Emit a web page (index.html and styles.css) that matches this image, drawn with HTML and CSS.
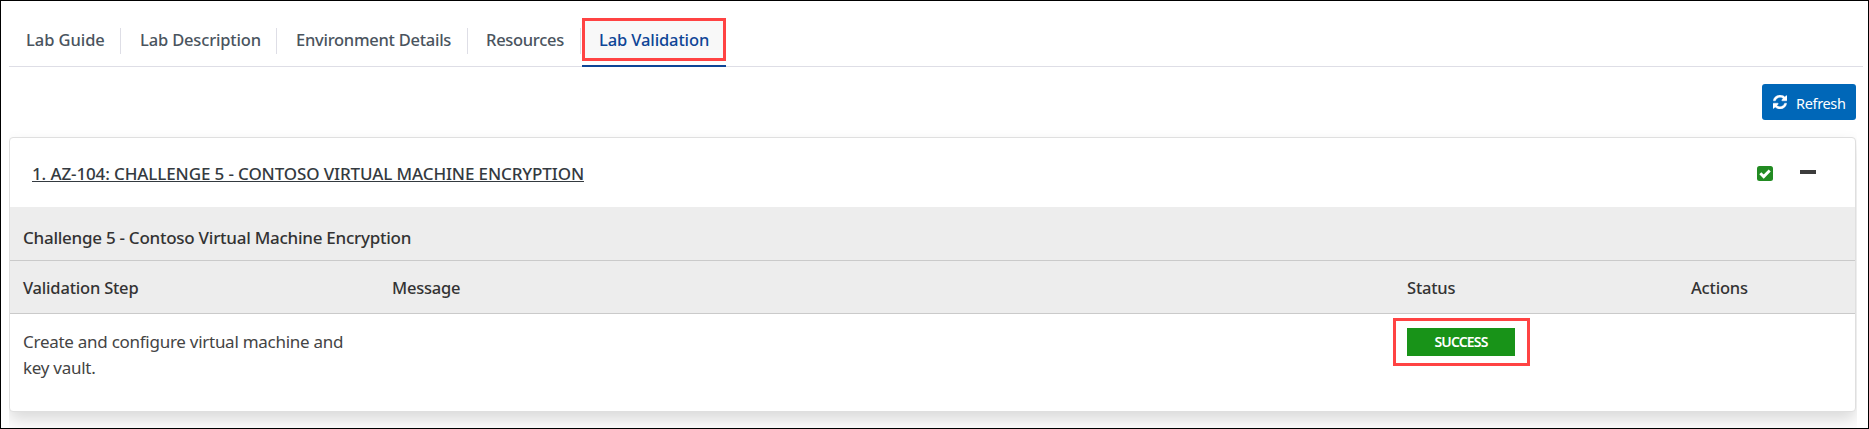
FILE: index.html
```html
<!DOCTYPE html>
<html lang="en">
<head>
<meta charset="utf-8">
<title>Lab Validation</title>
<link rel="stylesheet" href="styles.css">
</head>
<body>
<div class="page">
  <nav class="tabs">
    <a class="tab tab-guide">Lab Guide</a>
    <a class="tab tab-description">Lab Description</a>
    <a class="tab tab-environment">Environment Details</a>
    <a class="tab tab-resources">Resources</a>
    <a class="tab tab-validation active"><span class="highlight">Lab Validation</span></a>
  </nav>
  <main class="content">
    <div class="toolbar">
      <button class="refresh">
        <svg width="14" height="14" viewBox="0 0 1536 1536" fill="currentColor" stroke="currentColor" stroke-width="40"><path d="M1511 928q0 5-1 7-64 268-268 434.500T764 1536q-146 0-282.500-55T238 1324l-129 129q-19 19-45 19t-45-19-19-45V960q0-26 19-45t45-19h448q26 0 45 19t19 45-19 45l-137 137q71 66 161 102t187 36q134 0 250-65t186-179q11-17 53-117 8-23 30-23h192q13 0 22.500 9.500t9.500 22.500zm25-800v448q0 26-19 45t-45 19h-448q-26 0-45-19t-19-45 19-45l138-138Q969 256 768 256q-134 0-250 65T332 500q-11 17-53 117-8 23-30 23H50q-13 0-22.500-9.500T18 608v-7q65-268 270-434.500T768 0q146 0 284 55.500T1297 212l130-129q19-19 45-19t45 19 19 45z"/></svg>
        <span>Refresh</span>
      </button>
    </div>
    <section class="card">
      <header class="card-head">
        <h2 class="title">1. AZ-104: CHALLENGE 5 - CONTOSO VIRTUAL MACHINE ENCRYPTION</h2>
        <svg class="check" width="16" height="15" viewBox="0 0 16 15"><rect width="16" height="15" rx="2.500" fill="#228b22"/><path d="M3.300 7.300 6.700 10.600 12.700 4.500" fill="none" stroke="#fff" stroke-width="2.900"/></svg>
        <span class="collapse"></span>
      </header>
      <h3 class="subtitle">Challenge 5 - Contoso Virtual Machine Encryption</h3>
      <div class="row row-head">
        <span>Validation Step</span><span>Message</span><span>Status</span><span>Actions</span>
      </div>
      <div class="row row-body">
        <p class="step">Create and configure virtual machine and<br>key vault.</p>
        <span></span>
        <div class="status"><span class="badge">SUCCESS</span></div>
        <span></span>
      </div>
    </section>
  </main>
</div>
</body>
</html>
```
FILE: styles.css
```css
* { box-sizing: border-box; }
body { margin: 0; background: #fff; font-family: "Noto Sans", "Open Sans", sans-serif; }
.page {
  width: 1869px;
  height: 429px;
  border: 1px solid #000;
  padding: 17px 0 0 8px;
  overflow: hidden;
}

/* Tabs */
.tabs {
  display: flex;
  width: 1854px;
  height: 49px;
  border-bottom: 1px solid #dedee6;
}
.tab {
  position: relative;
  height: 49px;
  padding: 0 0 0 20px;
  font-size: 16.5px;
  font-weight: 500;
  line-height: 43px;
  color: #4a545e;
  white-space: nowrap;
}
.tab:not(.active)::after {
  content: "";
  position: absolute;
  right: 0;
  top: 10px;
  width: 1px;
  height: 26px;
  background: #dedee6;
}
.tab-guide { width: 112px; padding-left: 17px; letter-spacing: -0.06px; }
.tab-description { width: 156px; padding-left: 19px; letter-spacing: -0.16px; }
.tab-environment { width: 191px; padding-left: 19px; letter-spacing: -0.26px; }
.tab-resources { width: 113px; padding-left: 18px; letter-spacing: -0.3px; }
.tab-validation {
  width: 144px;
  margin-left: 1px;
  padding: 0;
  letter-spacing: -0.12px;
  color: #0e4596;
  border-bottom: 2px solid #0e4596;
}
.highlight {
  display: block;
  height: 43px;
  padding-left: 14px;
  border: 3px solid #ff4343;
  background: #f8f8f8;
  line-height: 37px;
}

/* Content */
.content { width: 1848px; height: 361px; padding-right: 1px; overflow: hidden; }
.toolbar { display: flex; justify-content: flex-end; padding-top: 17px; height: 70px; }
.refresh {
  display: flex;
  align-items: center;
  width: 94px;
  height: 36px;
  padding: 0 0 0 11px;
  gap: 9px;
  border: 0;
  border-radius: 3px;
  background: #0067b8;
  color: #fff;
  font: 400 14.5px/20px "Noto Sans", sans-serif;
  letter-spacing: -0.35px;
}
.refresh svg { margin-bottom: 1px; }
.refresh span { padding-top: 1px; }
.card {
  height: 275px;
  border: 1px solid #dfdfdf;
  border-radius: 4px;
  background: #fff;
  box-shadow: 0 8px 16px rgba(0, 0, 0, 0.15);
}
.card-head { display: flex; align-items: center; height: 69px; padding: 2px 39px 0 22px; }
.title {
  flex: 1;
  margin: 0;
  font-size: 17px;
  font-weight: 500;
  line-height: 24px;
  letter-spacing: -0.12px;
  color: #343a40;
  text-decoration: underline;
  text-decoration-thickness: 1px;
  text-underline-offset: 1px;
}
.check { margin-right: 27px; }
.collapse { width: 16px; height: 4px; margin-bottom: 3px; background: #3c3c3c; }
.subtitle {
  height: 54px;
  margin: 0;
  padding: 7px 0 0 13px;
  border-bottom: 1px solid #cacaca;
  background: #ededed;
  font-size: 17px;
  font-weight: 500;
  line-height: 48px;
  letter-spacing: -0.26px;
  color: #333;
}
.row { display: grid; grid-template-columns: 369px 1015px 284px 1fr; padding-left: 13px; }
.row-head {
  height: 53px;
  border-bottom: 1px solid #cacaca;
  background: #ededed;
  font-size: 16.5px;
  font-weight: 500;
  line-height: 54px;
  letter-spacing: -0.2px;
  color: #333;
}
.step {
  margin: 0;
  padding-top: 15px;
  font-size: 17px;
  line-height: 26px;
  letter-spacing: -0.27px;
  color: #444;
}
.status {
  width: 137px;
  height: 48px;
  margin: 4px 0 0 -14px;
  padding: 7px 0 0 11px;
  border: 3px solid #ff4343;
}
.badge {
  display: block;
  width: 108px;
  height: 28px;
  background: #189318;
  color: #fff;
  font-size: 14px;
  font-weight: 600;
  line-height: 28px;
  letter-spacing: -0.85px;
  text-align: center;
}
```
